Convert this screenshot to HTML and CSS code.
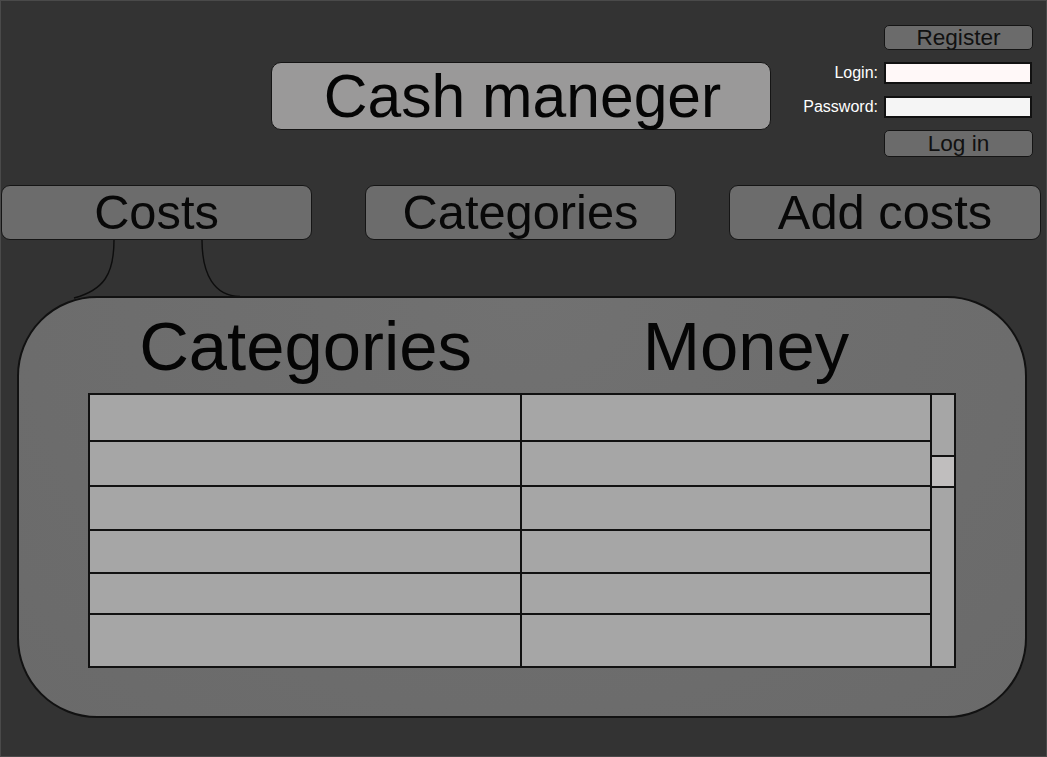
FILE: index.html
```html
<!DOCTYPE html>
<html lang="en">
<head>
<meta charset="utf-8">
<title>Cash maneger</title>
<link rel="stylesheet" href="styles.css">
</head>
<body>
<div class="page">
  <header class="header">
    <div class="title">Cash maneger</div>
    <div class="auth">
      <span></span>
      <button class="btn">Register</button>
      <label class="label" for="login">Login:</label>
      <input class="field field-login" id="login" type="text">
      <label class="label" for="password">Password:</label>
      <input class="field field-pass" id="password" type="password">
      <span></span>
      <button class="btn btn-login">Log in</button>
    </div>
  </header>

  <nav class="tabs">
    <div class="tab">Costs</div>
    <div class="tab">Categories</div>
    <div class="tab tab-wide">Add costs</div>
  </nav>

  <svg class="connector" width="300" height="80" viewBox="0 0 300 80">
    <path d="M114 0 C114 34, 104 50, 74 58" />
    <path d="M202 0 C202 34, 214 56, 240 56.5" />
  </svg>

  <section class="panel">
    <div class="panel-head">
      <span class="col-title col-cat">Categories</span>
      <span class="col-title col-money">Money</span>
    </div>
    <div class="table">
      <div class="rows">
        <div class="row r1"><div class="cell left"></div><div class="cell"></div></div>
        <div class="row r2"><div class="cell left"></div><div class="cell"></div></div>
        <div class="row r3"><div class="cell left"></div><div class="cell"></div></div>
        <div class="row r4"><div class="cell left"></div><div class="cell"></div></div>
        <div class="row r5"><div class="cell left"></div><div class="cell"></div></div>
        <div class="row r6"><div class="cell left"></div><div class="cell"></div></div>
      </div>
      <div class="scrollbar"><div class="thumb"></div></div>
    </div>
  </section>
</div>
</body>
</html>
```

FILE: styles.css
```css
* { box-sizing: border-box; }

html, body {
  margin: 0;
  padding: 0;
}

body {
  width: 1047px;
  height: 757px;
  background: #333333;
  border: 1px solid #4a4a4a;
  font-family: "Liberation Sans", Arial, sans-serif;
  color: #111;
  overflow: hidden;
}

.page {
  position: relative;
  height: 100%;
}

.header {
  display: flex;
  align-items: flex-start;
  padding-top: 24px;
}

.title {
  margin-top: 37px;
  margin-left: 270px;
  width: 500px;
  height: 68px;
  background: #9a9999;
  border: 1px solid #151515;
  border-radius: 10px;
  font-size: 60.6px;
  line-height: 66px;
  text-align: center;
  color: #050505;
  padding-left: 3px;
}

.auth {
  margin-left: auto;
  margin-right: 13px;
  display: grid;
  grid-template-columns: auto 149px;
  grid-template-rows: 25px 22px 22px 27px;
  column-gap: 6px;
  row-gap: 12px;
  align-items: center;
}

.btn {
  height: 100%;
  width: 100%;
  margin: 0;
  padding: 0;
  background: #6b6b6b;
  border: 1px solid #151515;
  border-radius: 5px;
  font-family: "Liberation Sans", Arial, sans-serif;
  font-size: 22.6px;
  line-height: 23px;
  color: #111;
}

.label {
  color: #ffffff;
  font-size: 16px;
  text-align: right;
  justify-self: end;
}

.field {
  height: 22px;
  width: 148px;
  margin: 0;
  padding: 0 3px;
  border: 2px solid #111;
  border-radius: 0;
  outline: none;
}

.field-login { background: #fff8f8; }
.field-pass { background: #f5f5f5; }

.tabs {
  display: flex;
  justify-content: space-between;
  margin-top: 28px;
  padding-right: 5px;
}

.tab {
  width: 311px;
  height: 55px;
  background: #6c6c6c;
  border: 1px solid #151515;
  border-radius: 9px;
  font-size: 48.8px;
  line-height: 53px;
  text-align: center;
  color: #080808;
}

.tab-wide { width: 312px; }

.connector {
  position: absolute;
  left: -1px;
  top: 239px;
  overflow: visible;
}

.connector path {
  fill: none;
  stroke: #0d0d0d;
  stroke-width: 1.4;
}

.panel {
  position: relative;
  margin-top: 56px;
  margin-left: 16px;
  width: 1010px;
  height: 422px;
  border: 2px solid #111;
  border-radius: 80px;
  background: radial-gradient(ellipse at 50% 0%, #717171 0%, #6d6d6d 55%, #6a6a6a 100%);
  padding-top: 15px;
  padding-left: 69px;
}

.panel-head {
  display: flex;
  height: 68px;
}

.col-title {
  font-size: 68.8px;
  line-height: 68px;
  text-align: center;
  color: #050505;
}

.col-cat { width: 435px; }
.col-money { width: 420px; margin-left: 13px; }

.table {
  margin-top: 12px;
  width: 868px;
  height: 275px;
  border: 2px solid #111;
  background: #a6a6a6;
  display: flex;
}

.rows {
  flex: 1;
  display: flex;
  flex-direction: column;
}

.row {
  display: flex;
  border-bottom: 2px solid #111;
}

.row.r1 { height: 47px; }
.row.r2 { height: 45px; }
.row.r3 { height: 44px; }
.row.r4 { height: 43px; }
.row.r5 { height: 41px; }
.row.r6 { flex: 1; border-bottom: 0; }

.cell { flex: 1; }
.cell.left {
  flex: 0 0 432px;
  border-right: 2px solid #111;
}

.scrollbar {
  width: 24px;
  border-left: 2px solid #111;
  background: #a6a6a6;
}

.thumb {
  margin-top: 60px;
  height: 33px;
  background: #c0bebe;
  border-top: 2px solid #111;
  border-bottom: 2px solid #111;
}
```
